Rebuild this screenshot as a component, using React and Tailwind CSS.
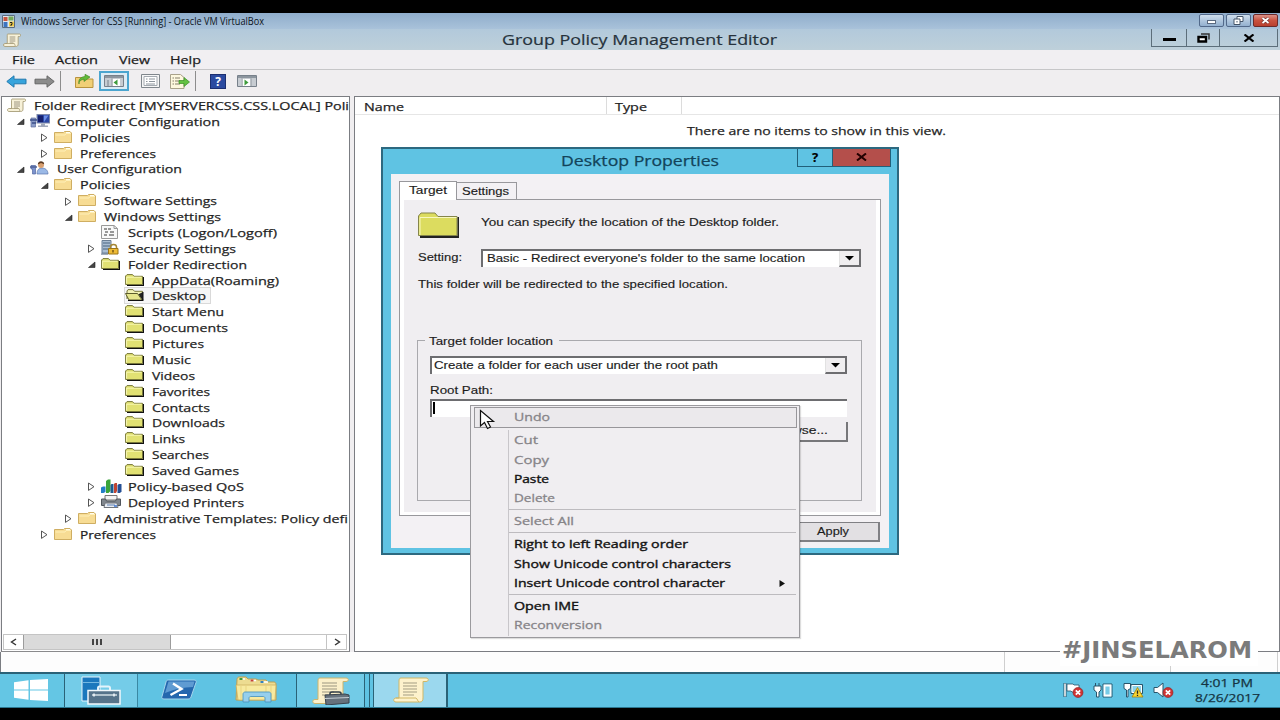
import { useLayoutEffect, useRef } from "react";

// Text stretched sideways to a fixed width, the guest screen is 4:3 shown wide
const Text = ({ w, className = "", children }) => {
  const ref = useRef(null);

  useLayoutEffect(() => {
    const el = ref.current;
    el.style.transform = "none";
    el.style.transform = `scaleX(${w / el.getBoundingClientRect().width})`;
  }, [w, children]);

  return (
    <span className={`block shrink-0 whitespace-nowrap ${className}`} style={{ width: w }}>
      <span ref={ref} className="inline-block origin-left">
        {children}
      </span>
    </span>
  );
};

// ---- tree icons ----
const ScrollIcon = ({ className = "w-[19px] h-[14px]" }) => (
  <svg className={className} viewBox="0 0 19 14" preserveAspectRatio="none">
    <path d="M5 1h12.500c1.500 0 1.500 2.500 0 2.500H16V11c0 2-1 2.500-2.500 2.500H2c-2 0-2-3 0-3h2.500V3C4.500 2 4.500 1 5 1z" fill="#f7f1d8" stroke="#a79d78" strokeWidth=".9" />
    <path d="M7 4h6M7 6h6M7 8h6M7 10h4" stroke="#938d78" strokeWidth=".9" />
    <path d="M3 10.500h9l1 2.500" stroke="#a79d78" strokeWidth=".8" fill="none" />
  </svg>
);

const FolderIcon = () => (
  <svg className="w-[18px] h-[12px]" viewBox="0 0 18 12">
    <path d="M.5 1.500h9l1-1h5.500l1.500 1.500v9.500H.5z" fill="#f7dc94" stroke="#cfae62" />
    <path d="M1.500 4h9.500l1-1.500h5" stroke="#fff0b8" fill="none" />
    <path d="M12 1.500h4" stroke="#fffdf0" />
  </svg>
);

const YellowFolder = () => (
  <svg className="w-[19px] h-[12px]" viewBox="0 0 19 12">
    <path d="M2 11.500h16.500V3" stroke="#111" strokeWidth="1.600" fill="none" />
    <path d="M.6 10.500V2L2 .6h5.500L9 2.300h8.500v8.200z" fill="#e1e173" stroke="#77773a" />
    <path d="M1.600 9.500V3.200h14.900" stroke="#ffffc4" fill="none" strokeWidth=".8" />
  </svg>
);

const OpenFolder = () => (
  <svg className="w-[19px] h-[12px]" viewBox="0 0 19 12">
    <path d="M2 10V2L3 .6h5L9.500 2.300h8V11" fill="#f2f2b4" stroke="#77773a" />
    <path d="M.5 4.500h12l4.500 6.500H4z" fill="#e6e68c" stroke="#5c5c2c" />
    <path d="M14 5l4 6V3" fill="#222" stroke="#111" />
    <path d="M3 11.500h15.500" stroke="#111" />
  </svg>
);

const ComputerIcon = () => (
  <svg className="w-[20px] h-[14px]" viewBox="0 0 20 14">
    <rect x="7" y=".5" width="12.500" height="8.500" fill="#2c49a8" stroke="#7e89a8" />
    <path d="M8 1.500h5v6.500H8z" fill="#16206e" />
    <path d="M14 1.500h4.500L14 8z" fill="#6c8ee6" />
    <path d="M11 9.500h4v2h3v1.500H8v-1.500h3z" fill="#a0a8ba" />
    <path d="M1 4h4.500v9H1z" fill="#8b9cc8" stroke="#5f6f9e" strokeWidth=".7" />
    <path d="M0 6h7M2 9h4" stroke="#3d4f88" strokeWidth="1.500" />
  </svg>
);

const UserIcon = () => (
  <svg className="w-[19px] h-[14px]" viewBox="0 0 19 14">
    <path d="M7 13c0-4 2-6 5-6s6 2 6 6z" fill="#9bb9e6" stroke="#5b77ad" strokeWidth=".7" />
    <circle cx="11" cy="4" r="3" fill="#d9a070" />
    <path d="M7.800 3.500C8 1 9.500.3 11 .3s3.200.7 3.200 3L11 2z" fill="#5a3a22" />
    <path d="M1 4.500h4.500v8.500H2.500V8H1z" fill="#7c93cd" stroke="#5569a0" strokeWidth=".7" />
    <path d="M0 6h7" stroke="#4e6096" strokeWidth="1.500" />
  </svg>
);

const ScriptIcon = () => (
  <svg className="w-[17px] h-[14px]" viewBox="0 0 17 14">
    <path d="M.5.500h12.500l3.500 3v10H.5z" fill="#f8f8f8" stroke="#999" />
    <path d="M3 4h3M7 4h3M4 7h3M9 7h4M3 10h3M8 10h5" stroke="#777" strokeWidth="1.400" />
    <path d="M13 .5v3h3.500" stroke="#999" fill="none" />
  </svg>
);

const SecurityIcon = () => (
  <svg className="w-[18px] h-[15px]" viewBox="0 0 18 15">
    <path d="M1 .500h9v12.500H1z" fill="#a9bdd2" stroke="#6b7f96" />
    <path d="M2 3h7M2 6h7M2 9h6" stroke="#4b6480" strokeWidth="1.200" />
    <path d="M9.500 9V7c0-3.500 6-3.500 6 0v2" fill="none" stroke="#a58735" strokeWidth="1.500" />
    <path d="M7.500 8.500h9.500v5.500H7.500z" fill="#eebb35" stroke="#9c7417" />
    <path d="M12 10v2.500" stroke="#705010" strokeWidth="1.400" />
    <path d="M0 14h7" stroke="#445c78" />
  </svg>
);

const ChartIcon = () => (
  <svg className="w-[21px] h-[14px]" viewBox="0 0 21 14">
    <path d="M0 8.500l2-1h2.500v5.500l-2 1H0z" fill="#237ec7" />
    <path d="M5 2l2-1.500h2.500V12L7.500 14H5z" fill="#3aa43a" />
    <path d="M9.500 6l1-1h2v9h-3z" fill="#1c5c90" />
    <path d="M13 5l1-1h2v8l-1 2h-2z" fill="#c14432" />
    <path d="M16.500 6l1.500-1h2.500v7.500L19 14h-2.500z" fill="#244f94" />
  </svg>
);

const PrinterIcon = () => (
  <svg className="w-[20px] h-[13px]" viewBox="0 0 20 13">
    <path d="M4 .500h12V5H4z" fill="#f3f3f3" stroke="#777" />
    <path d="M.5 4h4l1 2h9l1-2h4v6.500H.5z" fill="#80868d" stroke="#50565c" />
    <path d="M4 8h12l1 4.500H3z" fill="#e8edf4" stroke="#70757c" />
    <path d="M6 10h8" stroke="#5c7cab" />
    <path d="M13 11h3" stroke="#3e73d0" strokeWidth="1.500" />
  </svg>
);

const Expander = ({ open }) => (
  <svg className="w-[9px] h-[9px] relative top-px" viewBox="0 0 9 9">
    {open ? (
      <path d="M8 2V7.500H1.500z" fill="#444" stroke="#222" strokeWidth=".6" />
    ) : (
      <path d="M1.500 1l5.500 3.700-5.500 3.700z" fill="#fff" stroke="#555" />
    )}
  </svg>
);

const icons = {
  scroll: <ScrollIcon />,
  computer: <ComputerIcon />,
  user: <UserIcon />,
  folder: <FolderIcon />,
  yellow: <YellowFolder />,
  openfolder: <OpenFolder />,
  script: <ScriptIcon />,
  security: <SecurityIcon />,
  chart: <ChartIcon />,
  printer: <PrinterIcon />,
};

const indent = [
  "pl-[5px]",
  "pl-[14px]",
  "pl-[37.500px]",
  "pl-[61.500px]",
  "pl-[85px]",
  "pl-[109px]",
];

// level, expander (open / closed / none), icon, label, label width
const tree = [
  [0, "", "scroll", "Folder Redirect [MYSERVERCSS.CSS.LOCAL] Poli", 315],
  [1, "open", "computer", "Computer Configuration", 163],
  [2, "closed", "folder", "Policies", 50],
  [2, "closed", "folder", "Preferences", 76],
  [1, "open", "user", "User Configuration", 125],
  [2, "open", "folder", "Policies", 50],
  [3, "closed", "folder", "Software Settings", 113],
  [3, "open", "folder", "Windows Settings", 117],
  [4, "none", "script", "Scripts (Logon/Logoff)", 149],
  [4, "closed", "security", "Security Settings", 108],
  [4, "open", "yellow", "Folder Redirection", 119],
  [5, "none", "yellow", "AppData(Roaming)", 127],
  [5, "none", "openfolder", "Desktop", 54],
  [5, "none", "yellow", "Start Menu", 72],
  [5, "none", "yellow", "Documents", 76],
  [5, "none", "yellow", "Pictures", 52],
  [5, "none", "yellow", "Music", 39],
  [5, "none", "yellow", "Videos", 43],
  [5, "none", "yellow", "Favorites", 58],
  [5, "none", "yellow", "Contacts", 58],
  [5, "none", "yellow", "Downloads", 73],
  [5, "none", "yellow", "Links", 33],
  [5, "none", "yellow", "Searches", 57],
  [5, "none", "yellow", "Saved Games", 87],
  [4, "closed", "chart", "Policy-based QoS", 116],
  [4, "closed", "printer", "Deployed Printers", 116],
  [3, "closed", "folder", "Administrative Templates: Policy defi", 244],
  [2, "closed", "folder", "Preferences", 76],
];

const TreeRow = ({ row }) => {
  const [level, expander, icon, label, width] = row;
  const selected = label === "Desktop";
  return (
    <div className={`flex items-center h-[15.890px] shrink-0 ${indent[level]}`}>
      {level > 0 && (
        <span className="w-[14px] shrink-0">
          {expander !== "none" && <Expander open={expander === "open"} />}
        </span>
      )}
      <span
        className={`h-[15px] flex items-center shrink-0 ${
          selected ? "outline outline-[#d9d9d9] bg-[#f6f6f6] pr-[4px]" : ""
        }`}
      >
        <span className="w-[26.500px] shrink-0 flex items-center justify-start">{icons[icon]}</span>
        <Text w={width} className="leading-[15px] pt-px">
          {label}
        </Text>
      </span>
    </div>
  );
};

const VmTitleBar = () => (
  <div className="h-[16px] shrink-0 flex items-center pl-[2px] pr-[2px] bg-linear-to-b from-[#8fadcb] to-[#a9c2da]">
    <svg className="w-[13px] h-[13px] mr-[6px]" viewBox="0 0 13 13">
      <path d="M.5.500h12v12H.5z" fill="#dfe8f0" stroke="#5a6c80" />
      <path d="M1.500 2h4v4h-4z" fill="#c9553f" />
      <path d="M6.500 1.500h5v4h-5z" fill="#72a958" />
      <path d="M1.500 7h4v5h-4z" fill="#3c74c0" />
      <path d="M7 6.500h5v5H7z" fill="#ecc94a" />
      <path d="M8 7.500h2v2H9v1.500" stroke="#222" fill="none" />
    </svg>
    <Text w={243} className="text-[11px] leading-[14px] text-[#0c1420]">
      Windows Server for CSS [Running] - Oracle VM VirtualBox
    </Text>
    <div className="ml-auto flex gap-[2px] self-start pt-px">
      <span className="w-[25px] h-[13px] rounded-[2px] border border-[#52698a] bg-linear-to-b from-[#cfdeed] to-[#93b0cf] flex items-center justify-center">
        <span className="w-[9px] h-[4px] mt-[3px] bg-white border border-[#5a6a80]" />
      </span>
      <span className="w-[25px] h-[13px] rounded-[2px] border border-[#52698a] bg-linear-to-b from-[#cfdeed] to-[#93b0cf] flex items-center justify-center">
        <svg className="w-[11px] h-[9px]" viewBox="0 0 11 9">
          <path d="M4 .500h6v5H4z" fill="#fff" stroke="#445468" />
          <path d="M1 3h6v5.500H1z" fill="#fff" stroke="#445468" />
          <path d="M3.500 5h1v1.500h-1z" fill="#445468" />
        </svg>
      </span>
      <span className="w-[25px] h-[13px] rounded-[2px] border border-[#6b2a2a] bg-linear-to-b from-[#dc9085] via-[#c9513f] to-[#b93f2e] flex items-center justify-center">
        <svg className="w-[9px] h-[7px]" viewBox="0 0 9 7">
          <path d="M1.500 1l6 5M7.500 1l-6 5" stroke="#6b2a2a" strokeWidth="3" />
          <path d="M1.500 1l6 5M7.500 1l-6 5" stroke="#fff" strokeWidth="1.800" />
        </svg>
      </span>
    </div>
  </div>
);

const AppTitleBar = () => (
  <div className="h-[21px] shrink-0 flex pl-[3px] pr-[2px] bg-linear-to-b from-[#b2c9db] to-[#bed0da]">
    <div className="pt-[4px] w-[499px] shrink-0">
      <ScrollIcon className="w-[18px] h-[14px]" />
    </div>
    <Text w={275} className="text-[14px] leading-[21px] text-[#26323c] [-webkit-text-stroke:0.2px]">
      Group Policy Management Editor
    </Text>
    <div className="ml-auto h-[18px] flex border border-t-0 border-[#5c6e7a]">
      <span className="w-[35px] flex items-center justify-center border-r border-[#5c6e7a]">
        <span className="w-[13px] h-[3px] bg-black mt-[3px]" />
      </span>
      <span className="w-[33px] flex items-center justify-center border-r border-[#5c6e7a]">
        <svg className="w-[13px] h-[10px]" viewBox="0 0 13 10">
          <path d="M4 1h8v5.500" stroke="#333" strokeWidth="1.500" fill="none" />
          <path d="M1.500 4h7.500v4.500H1.500z" stroke="#000" strokeWidth="2.400" fill="#fff" />
        </svg>
      </span>
      <span className="w-[57px] flex items-center justify-center">
        <svg className="w-[12px] h-[8px]" viewBox="0 0 12 8">
          <path d="M1.500.500l9 7M10.500.500l-9 7" stroke="#000" strokeWidth="2.200" />
        </svg>
      </span>
    </div>
  </div>
);

const MenuBar = () => (
  <div className="h-[20px] shrink-0 flex items-center pl-[12px] bg-[#f1eff2] border-b border-[#c6c6c8] text-[11.500px] leading-[18px] text-[#1c1c1c] [-webkit-text-stroke:0.25px]">
    <Text w={23} className="mr-[20px]">File</Text>
    <Text w={43} className="mr-[21px]">Action</Text>
    <Text w={31} className="mr-[20px]">View</Text>
    <Text w={31}>Help</Text>
  </div>
);

const Arrow = ({ back }) => (
  <svg className="w-[21px] h-[13px] shrink-0" viewBox="0 0 21 13">
    {back ? (
      <path d="M.8 6.500L8 .800v3.400h12v4.600H8v3.400z" fill="#37a4dc" stroke="#2179ae" />
    ) : (
      <path d="M20.200 6.500L13 .800v3.400H1v4.600h12v3.400z" fill="#8c8c8c" stroke="#666" />
    )}
  </svg>
);

const PaneIcon = ({ right }) => (
  <svg className="w-[20px] h-[12px] shrink-0" viewBox="0 0 20 12">
    <path d="M.5.500h19v11H.5z" fill="#fff" stroke="#77808a" />
    <path d="M1 1h18v2.500H1z" fill="#8c959e" />
    <path d={right ? "M1 4h3v7H1zM14.500 4h4.500v7h-4.500z" : "M1 4h6.500v7H1zM16 4h3v7h-3z"} fill="#c7ccd2" />
    <path d={right ? "M14 3.500v8M5 3.500v8" : "M8 3.500v8M4 5v6"} stroke="#77808a" />
    <path d={right ? "M7.500 4.500l4 3-4 3z" : "M13.500 4.500l-4 3 4 3z"} fill="#3f9b3c" />
  </svg>
);

const Toolbar = () => (
  <div className="h-[25px] shrink-0 flex items-center pl-[6px] pb-[3px] bg-[#f0eef0]">
    <Arrow back />
    <span className="w-[7px]" />
    <Arrow />
    <span className="w-px h-[20px] bg-[#8d8d8d] ml-[5px] mr-[14px]" />
    <svg className="w-[19px] h-[14px] shrink-0" viewBox="0 0 19 14">
      <path d="M.5 3.500h6l1.500 1.500h10v8.500H.5z" fill="#f1cf76" stroke="#b8933e" />
      <path d="M4 10c0-4 3-4 5-5V7.500l6-4.500L10 .300v2.200C5 3 3 6 4 10z" fill="#62bb3a" stroke="#3f8322" strokeWidth=".6" />
    </svg>
    <span className="ml-[5px] w-[30px] h-[20px] bg-[#dcecf5] border-2 border-[#4ba5cf] flex items-center justify-center">
      <PaneIcon />
    </span>
    <svg className="w-[19px] h-[14px] ml-[12px] shrink-0" viewBox="0 0 19 14">
      <path d="M.5.500h18v13H.5z" fill="#f6f6f6" stroke="#7f868c" />
      <path d="M3 2.500h13v9H3z" fill="#fff" stroke="#a3a9b0" />
      <path d="M5 5h1.500M8 5h6M5 7.500h1.500M8 7.500h6M5 10h9" stroke="#8c949c" />
    </svg>
    <svg className="w-[20px] h-[15px] ml-[10px] shrink-0" viewBox="0 0 20 15">
      <path d="M.5.500h10l3.500 3v11H.5z" fill="#fdf8de" stroke="#a9a28a" />
      <path d="M2.500 4h1.500M5 4h5M2.500 7h1.500M5 7h5M2.500 10h1.500M5 10h5" stroke="#857f6b" />
      <path d="M9 6.500h5V3.500l5.500 4.500-5.500 4.500V9.500H9z" fill="#63c142" stroke="#3a8c22" strokeWidth=".7" />
    </svg>
    <span className="w-px h-[20px] bg-[#8d8d8d] ml-[5px] mr-[14px]" />
    <span className="w-[16px] h-[15px] bg-[#2b4aa0] border border-[#1c2f70] text-white font-bold text-[12px] leading-[13px] text-center">
      ?
    </span>
    <span className="w-[11px]" />
    <PaneIcon right />
  </div>
);

const TreePane = () => (
  <div className="w-[349px] shrink-0 ml-px mr-px flex flex-col border border-[#7b7d82] border-b-[#8a8a8c] bg-white overflow-hidden">
    <div className="flex-1 flex flex-col text-[11.400px] text-[#1f1f1f] [-webkit-text-stroke:0.25px]">
      {tree.map((row, i) => (
        <TreeRow key={i} row={row} />
      ))}
    </div>
    <div className="h-[16px] ml-px mr-[2px] flex border border-[#c4c4c4] mb-px text-[#333]">
      <ScrollArrow d="M6 1L1.500 4 6 7" />
      <div className="w-[148px] h-full bg-[#dadada] border-x border-[#9c9c9c] flex items-center justify-center gap-[2px]">
        <span className="w-[2px] h-[6px] bg-[#444]" />
        <span className="w-[2px] h-[6px] bg-[#444]" />
        <span className="w-[2px] h-[6px] bg-[#444]" />
      </div>
      <div className="flex-1" />
      <div className="border-l border-[#c4c4c4] flex">
        <ScrollArrow d="M2 1l4.500 3L2 7" />
      </div>
    </div>
  </div>
);

const ScrollArrow = ({ d }) => (
  <span className="w-[19px] flex items-center justify-center">
    <svg className="w-[8px] h-[8px]" viewBox="0 0 8 8">
      <path d={d} fill="none" stroke="#333" strokeWidth="1.400" />
    </svg>
  </span>
);

const ListPane = () => (
  <div className="flex-1 ml-[3px] border border-[#7b7d82] bg-white text-[11.400px] text-[#1f1f1f] [-webkit-text-stroke:0.25px]">
    <div className="h-[18px] flex border-b border-[#e6e6e6] leading-[19px]">
      <div className="w-[252px] pl-[9px] border-r border-[#dcdcdc]">
        <Text w={40}>Name</Text>
      </div>
      <div className="w-[75px] pl-[8px] border-r border-[#dcdcdc]">
        <Text w={32}>Type</Text>
      </div>
    </div>
    <div className="pl-[332px] pt-[6px] leading-[19px]">
      <Text w={259}>There are no items to show in this view.</Text>
    </div>
  </div>
);

const StatusBar = () => (
  <div className="h-[20px] shrink-0 bg-[#fdfdfd] flex border-l border-[#7b7d82]">
    <span className="w-[1004px] border-r border-[#cfcfcf]" />
    <span className="w-[166px] border-r border-[#cfcfcf]" />
    <span className="w-[107px] border-r border-[#cfcfcf]" />
  </div>
);

const RedCross = () => (
  <>
    <circle cx="15" cy="10.500" r="5" fill="#cf3434" stroke="#8e1c1c" strokeWidth=".6" />
    <path d="M12.800 8.300l4.400 4.400M17.200 8.300l-4.400 4.400" stroke="#fff" strokeWidth="1.700" />
  </>
);

const Taskbar = () => (
  <div className="h-[36px] shrink-0 flex bg-[#5fc3e3] border-t-2 border-b border-t-[#2a6277] border-b-[#2b7790]">
    <div className="w-[65px] flex items-center justify-center border-r border-[#2a6277] bg-[#64c6e4]">
      <svg className="w-[34px] h-[22px] relative -left-[1px] -top-px" viewBox="0 0 34 22">
        <path d="M0 3.200L14.500 1.200V10.400H0zM16 1L34 0v10.400H16zM0 11.600h14.500v9.200L0 18.800zM16 11.600h18V22l-18-1z" fill="#fff" />
      </svg>
    </div>
    <div className="w-[73px] flex items-center justify-center border-r border-[#3a88a3] bg-[#74cce8]">
      <svg className="w-[40px] h-[29px]" viewBox="0 0 40 29">
        <path d="M1 1h18v24H1z" fill="#1b78bd" stroke="#e4f4fb" />
        <path d="M2 6.500h16" stroke="#73b8e2" />
        <path d="M17 14v-2c0-1 .5-1.500 1.500-1.500h9c1 0 1.500.500 1.500 1.500v2" fill="none" stroke="#e4f4fb" strokeWidth="2" />
        <path d="M7 14.500h32v13.500H7z" fill="#56738a" stroke="#f2f8fb" strokeWidth="1.500" />
        <path d="M11 19h25" stroke="#f2f8fb" strokeWidth="1.200" />
        <path d="M13 17.500v3M33 17.500v3" stroke="#f2f8fb" strokeWidth="1.500" />
      </svg>
    </div>
    <div className="w-[82px] flex items-center justify-center">
      <svg className="w-[36px] h-[21px] relative -top-px" viewBox="0 0 36 21">
        <path d="M7.500 1H33c2 0 2.500 1 2 2.500L30 18c-.5 1.500-1.500 2-3 2H3c-2 0-2.500-1-2-2.500L5 3c.4-1.500 1-2 2.500-2z" fill="#2467ae" stroke="#a6d5ec" />
        <path d="M7.500 2.500h26L32 8C23 8 13 10 4 14z" fill="#5f9bd2" />
        <path d="M12 4.500l8.500 5.500-11 6" fill="none" stroke="#fff" strokeWidth="2.400" />
        <path d="M18 16h8" stroke="#fff" strokeWidth="2" />
      </svg>
    </div>
    <div className="w-[77px] flex items-center justify-center border-r border-[#2a6277]">
      <svg className="w-[42px] h-[27px] relative -left-[2px] -top-px" viewBox="0 0 42 27">
        <path d="M2 3.500C2 2 3 1 4 1h7l2 2h8l2 1h8l2 2h6c1 0 2 1 2 2v16H1z" fill="#eddc91" stroke="#bd9f50" />
        <path d="M5 3h5M15 4.500h6M26 6h7" stroke="#fff" strokeWidth="1.500" />
        <path d="M6 2v2" stroke="#3b9a3c" strokeWidth="3" />
        <path d="M17 3.500v2" stroke="#c54436" strokeWidth="3" />
        <path d="M27 5v2" stroke="#3482bd" strokeWidth="3" />
        <path d="M1 9h40l-1 15H3z" fill="#f8ea9f" stroke="#cdb061" strokeWidth=".8" />
        <path d="M6 10v14M11 10v14M31 10v14M36 10v14" stroke="#e9d581" />
        <path d="M8 26V18c0-1 1-2 2-2h24c1 0 2 1 2 2v8h-6v-4c0-1-1-1.500-2-1.500H16c-1 0-2 .500-2 1.500v4z" fill="#96cfec" stroke="#4f96bf" strokeWidth=".9" />
      </svg>
    </div>
    <div className="w-[68px] flex items-center justify-center border-r border-[#2a6277] bg-[#72cbe7]">
      <svg className="w-[38px] h-[28px]" viewBox="0 0 38 28">
        <path d="M8 1h26c3 0 3 3.500 0 3.500h-3V23c0 2-1 3.500-3 3.500H3c-3 0-3-4 0-4h3V4c0-2 .5-3 2-3z" fill="#fbf0ca" stroke="#ccb46c" />
        <path d="M10 6h15M10 9h15M10 12h15M10 15h12M10 18h6" stroke="#9b9680" />
        <path d="M18 18v-1.500c0-1 1-1.500 2-1.500h7c1 0 2 .500 2 1.500V18" fill="none" stroke="#333e48" strokeWidth="1.500" />
        <path d="M13 18l20-1 4 1v8l-23 2z" fill="#66717c" stroke="#38424c" />
        <path d="M13 21.500l24-1" stroke="#c5ced5" />
      </svg>
    </div>
    <div className="w-[5px] border-r border-[#2a6277]" />
    <div className="w-[4px] border-r border-[#2a6277]" />
    <div className="w-[74px] flex items-center justify-center border-r-2 border-[#2a6277] bg-[#9bd8ee]">
      <svg className="w-[36px] h-[26px] relative left-px -top-px" viewBox="0 0 36 26">
        <path d="M8 1h25c3 0 3 3.500 0 3.500h-3V21c0 2.500-1 4-3 4H3c-3 0-3-4 0-4h3V4c0-2 .5-3 2-3z" fill="#fdf2cc" stroke="#d0b766" />
        <path d="M10 6h14M10 9h14M10 12h14M10 15h14M10 18h11" stroke="#a39d82" />
        <path d="M3 21h20c1.500 1 1.500 3 3 4" fill="none" stroke="#d0b766" />
      </svg>
    </div>

    <div className="ml-auto flex items-center pr-[20px]">
      <svg className="w-[21px] h-[16px] relative -top-px" viewBox="0 0 21 16">
        <path d="M2 1v14" stroke="#28546a" strokeWidth="3" />
        <path d="M2 1.500v13" stroke="#fff" strokeWidth="1.500" />
        <path d="M4 2h6l1 1h5v7H9L8 9H4z" fill="#fff" stroke="#28546a" strokeWidth=".8" />
        <RedCross />
      </svg>
      <svg className="w-[20px] h-[16px] ml-[9px] relative -top-px" viewBox="0 0 20 16">
        <path d="M1 4h7v4L6 10v5H3.500v-5L1 8zM2.500 1v3M6 1v3" fill="#fff" stroke="#28546a" />
        <path d="M10 2h9v13h-9z" fill="#8ccbe0" stroke="#28546a" />
        <path d="M11.500 3.500h6v10h-6z" fill="#78cbe6" stroke="#fff" strokeWidth="1.800" />
      </svg>
      <svg className="w-[21px] h-[16px] ml-[10px] relative -top-px" viewBox="0 0 21 16">
        <path d="M8 2.500h11.500v9H8z" fill="#8bd3ea" stroke="#28546a" />
        <path d="M9 3.500h9.500v7H9z" fill="none" stroke="#fff" />
        <path d="M1 1.500h6.500v5L5 8v7H3.500V8L1 6.500z" fill="#fff" stroke="#28546a" />
        <path d="M14.500 5.500l5.500 9.500H9z" fill="#f8d432" stroke="#a1800c" strokeWidth=".8" />
        <path d="M14.500 8.500v3.200M14.500 12.700v1.200" stroke="#222" strokeWidth="1.300" />
      </svg>
      <svg className="w-[21px] h-[16px] ml-[9px] relative -top-px" viewBox="0 0 21 16">
        <path d="M1 5.500h3.500L10 1v14l-5.500-4.500H1z" fill="#fff" stroke="#28546a" />
        <RedCross />
      </svg>
      <div className="ml-[20px] w-[66px] flex flex-col items-center text-[11.500px] leading-[15px] text-[#153442] [-webkit-text-stroke:0.25px] relative -top-px">
        <Text w={52}>4:01 PM</Text>
        <Text w={65}>8/26/2017</Text>
      </div>
    </div>
  </div>
);

const ComboBox = ({ children, className }) => (
  <div className={`h-[18px] flex bg-white border-t-2 border-l-2 border-[#6d6d70] ${className}`}>
    {children}
    <span className="ml-auto w-[22px] bg-[#f0eef0] border-r-2 border-b-2 border-[#6d6d70] border-l border-l-[#e2e2e2] flex items-center justify-center">
      <svg className="w-[9px] h-[5px]" viewBox="0 0 9 5">
        <path d="M0 0h9L4.500 4.500z" fill="#000" />
      </svg>
    </span>
  </div>
);

const DesktopProperties = () => (
  <div className="absolute left-[381px] top-[147px] w-[518px] h-[408px] bg-[#5fc3e3] border-2 border-[#2d6980] font-['Liberation_Sans',sans-serif] text-[11px] text-[#1c1c1c] [-webkit-text-stroke:0.15px]">
    <div className="h-[25px] flex pl-[178px] font-['Open_Sans',sans-serif]">
      <Text w={158} className="text-[14px] leading-[23px] text-[#12435a] [-webkit-text-stroke:0.25px]">
        Desktop Properties
      </Text>
      <div className="ml-auto mr-[6px] h-[18px] flex border border-t-0 border-[#21607a]">
        <span className="w-[35px] text-center text-[13px] leading-[16px] font-bold text-black border-r border-[#21607a]">
          ?
        </span>
        <span className="w-[57px] bg-[#b44f4b] flex items-center justify-center pb-[2px]">
          <svg className="w-[11px] h-[8px]" viewBox="0 0 11 8">
            <path d="M1 .500l9 7M10 .500l-9 7" stroke="#200" strokeWidth="2" />
          </svg>
        </span>
      </div>
    </div>
    <div className="mx-[8px] h-[374px] bg-[#f3f1f4] pl-[8px] pr-[8px] pt-[6px] flex flex-col">
      <div className="flex items-end h-[19px] shrink-0">
        <div className="w-[58px] h-[19px] bg-white border border-b-0 border-[#98989c] pl-[9px] leading-[16px] relative -mb-px z-10">
          <Text w={38}>Target</Text>
        </div>
        <div className="w-[60px] h-[17px] border border-b-0 border-l-0 border-[#98989c] pl-[5px] leading-[16px]">
          <Text w={47}>Settings</Text>
        </div>
      </div>
      {/* tab page */}
      <div className="h-[317px] shrink-0 border border-[#98989c] bg-white pl-[4px] pr-[4px] pb-[3px]">
        <div className="h-full bg-[#f0eef1] pl-[14px] pt-[12px]">
          <div className="flex h-[26px]">
            <svg className="w-[41px] h-[26px]" viewBox="0 0 41 26">
              <path d="M2 25h38.200V5" stroke="#222" strokeWidth="1.800" fill="none" />
              <path d="M.5 23.500V4L3 1h14l3 3.500h19v19z" fill="#dcdc5f" stroke="#85854a" />
              <path d="M2 23V5.500h36.500" stroke="#f8f8c0" fill="none" />
            </svg>
            <Text w={298} className="ml-[22px] leading-[21px]">
              You can specify the location of the Desktop folder.
            </Text>
          </div>
          <div className="flex mt-[11px] h-[18px]">
            <Text w={44} className="leading-[16px]">Setting:</Text>
            <ComboBox className="w-[380px] ml-[19px]">
              <Text w={318} className="ml-[4px] leading-[15px]">
                Basic - Redirect everyone's folder to the same location
              </Text>
            </ComboBox>
          </div>
          <div className="mt-[9px] leading-[17px]">
            <Text w={310}>This folder will be redirected to the specified location.</Text>
          </div>
          <div className="mt-[47px] -ml-px w-[445px] h-[161px] border border-[#a9a9ad] pl-[12px]">
            <div className="-mt-[8px] -ml-[5px] w-[134px] pl-[4px] bg-[#f0eef1] leading-[16px]">
              <Text w={124}>Target folder location</Text>
            </div>
            <ComboBox className="w-[417px] mt-[7px]">
              <Text w={284} className="ml-[2px] leading-[14px]">
                Create a folder for each user under the root path
              </Text>
            </ComboBox>
            <div className="mt-[9px] leading-[15px]">
              <Text w={63}>Root Path:</Text>
            </div>
            <div className="mt-px w-[417px] h-[18px] bg-white border-t-2 border-l-2 border-[#6d6d70] pl-px pt-px">
              <div className="w-[1.500px] h-[12px] bg-black" />
            </div>
            <div className="mt-[5px] ml-[322px] w-[96px] h-[20px] border-r-2 border-b-2 border-[#77777a] bg-[#f0eef1] flex justify-end pr-[18px] leading-[17px]">
              <Text w={58}>Browse...</Text>
            </div>
          </div>
        </div>
      </div>
      <div className="mt-[6px] mr-px self-end w-[94px] h-[20px] bg-[#e2e0e3] border border-[#808084] border-r-2 border-b-2 pl-[30px] leading-[17px]">
        <Text w={32}>Apply</Text>
      </div>
    </div>
  </div>
);

const MenuItem = ({ label, w, disabled, sub }) => (
  <div
    className={`h-[19.400px] flex items-center pl-[5px] pr-[14px] leading-[18px] ${
      disabled ? "text-[#868488]" : "text-[#141414] [-webkit-text-stroke:0.4px]"
    }`}
  >
    <Text w={w}>{label}</Text>
    {sub && (
      <svg className="ml-auto w-[6px] h-[7px]" viewBox="0 0 6 7">
        <path d="M.5 0L6 3.500.5 7z" fill="#111" />
      </svg>
    )}
  </div>
);

const Divider = () => <div className="h-px my-[1.300px] mr-[3px] bg-[#bdbbbf]" />;

const ContextMenu = () => (
  <div className="absolute left-[470px] top-[405px] w-[330px] h-[233px] bg-[#f0eef1] border border-[#9b9a9e] shadow-[1px_1px_1px_#0002] font-['Open_Sans',sans-serif] text-[11.400px] [-webkit-text-stroke:0.3px]">
    <div className="mt-px ml-[3px] w-[323px] h-[21px] border border-[#97969a] bg-[#ebe9ec] flex items-center pl-[39px] pb-px text-[#868488]">
      <Text w={36}>Undo</Text>
    </div>
    <div className="ml-[37px] mt-[2px] h-[206px] border-l border-[#c8c6ca] pt-[0.500px]">
      <MenuItem label="Cut" w={24} disabled />
      <MenuItem label="Copy" w={35} disabled />
      <MenuItem label="Paste" w={35} />
      <MenuItem label="Delete" w={41} disabled />
      <Divider />
      <MenuItem label="Select All" w={60} disabled />
      <Divider />
      <MenuItem label="Right to left Reading order" w={174} />
      <MenuItem label="Show Unicode control characters" w={217} />
      <MenuItem label="Insert Unicode control character" w={211} sub />
      <Divider />
      <MenuItem label="Open IME" w={65} />
      <MenuItem label="Reconversion" w={88} disabled />
    </div>
  </div>
);

const Cursor = () => (
  <svg className="absolute left-[479px] top-[409px] w-[17px] h-[21px]" viewBox="0 0 17 21">
    <path d="M1.500 1.500v15.500l4-3.500 3 6 3-1.500-3-5.500h6z" fill="#fff" stroke="#111" strokeWidth="1.200" />
  </svg>
);

const App = () => {
  return (
    <div className="relative w-[1280px] h-[720px] overflow-hidden bg-black pt-[13px] flex flex-col font-['Open_Sans',sans-serif]">
      <VmTitleBar />
      <AppTitleBar />
      <MenuBar />
      <Toolbar />
      <div className="h-[557px] shrink-0 flex bg-[#f0eef0] pt-px">
        <TreePane />
        <ListPane />
      </div>
      <StatusBar />
      <Taskbar />

      <DesktopProperties />
      <ContextMenu />
      <Cursor />

      {/* channel watermark */}
      <div className="absolute left-[1060px] top-[637px] w-[198px] h-[29px] bg-white pl-[2px] font-['DejaVu_Sans',sans-serif] font-bold text-[23px] leading-[26px] text-[#7b7b7b]">
        <Text w={190}>#JINSELAROM</Text>
      </div>
    </div>
  );
};

export default App;
